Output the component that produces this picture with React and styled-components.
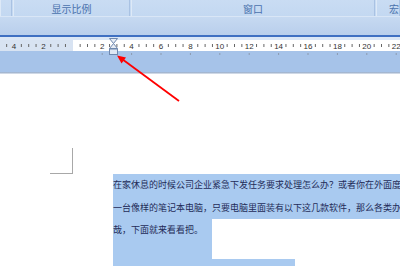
import React from 'react';
import styled, { createGlobalStyle } from 'styled-components';

const GlobalStyle = createGlobalStyle`
  html, body {
    margin: 0;
    padding: 0;
    width: 400px;
    height: 266px;
    overflow: hidden;
    background: #fff;
  }
`;

const Page = styled.div`
  position: relative;
  width: 400px;
  height: 266px;
  overflow: hidden;
  font-family: "Noto Sans CJK SC", "Liberation Sans", sans-serif;
`;

const LabelRow = styled.div`
  display: flex;
  height: 16px;
  background: linear-gradient(#c9dcf3, #c3d8f1);
  border-bottom: 1px solid #d9e6f6;
`;

const Group = styled.div`
  flex: ${p => (p.grow ? '1 0 auto' : '0 0 auto')};
  width: ${p => p.w}px;
  display: flex;
  align-items: center;
  justify-content: ${p => p.align || 'center'};
  padding-left: ${p => p.pad || 0}px;
  box-sizing: border-box;
  border-right: 1px solid #a9c2e3;
  border-left: 1px solid #dde9f7;
  margin-right: 1px;
  font-size: 10px;
  color: #4a72ad;
  white-space: nowrap;
  overflow: hidden;
`;

const RibbonBody = styled.div`
  height: 18px;
  background: linear-gradient(#c6d9f1, #b9cfec);
`;

const DarkLine = styled.div`
  height: 2px;
  background: #3f70c2;
`;

const LightStrip = styled.div`
  height: 3px;
  background: #dbe7f6;
`;

const RulerRow = styled.div`
  position: relative;
  height: 32px;
  background: #a6c3e9;
`;

const RulerStrip = styled.div`
  height: 11px;
  background: linear-gradient(to right, #d8e3f2 73px, #ffffff 73px);
  svg { display: block; overflow: visible; }
`;

const Marker = styled.svg`
  position: absolute;
  left: 109px;
  top: -2px;
`;

const Shadow = styled.div`
  height: 2px;
  background: linear-gradient(#8ea6c6, #e4e9f0);
`;

const Doc = styled.div`
  display: flex;
  flex-direction: column;
  padding-top: 74px;
`;

const CornerMark = styled.div`
  width: 22px;
  height: 25px;
  margin-left: 50px;
  border-right: 1px solid #a8a8a8;
  border-bottom: 1px solid #a8a8a8;
`;

const Selection = styled.div`
  margin-left: 113px;
  display: flex;
  flex-direction: column;
  font-size: 9px;
  color: #1f2c58;
`;

const Line = styled.div`
  height: 22.5px;
  line-height: 22.5px;
  background: #a9caf0;
  white-space: nowrap;
`;

const TailRow = styled.div`
  display: flex;
  height: 40px;
`;

const TailText = styled.div`
  width: 99px;
  background: #a9caf0;
  line-height: 22.5px;
  white-space: nowrap;
`;

const BottomBar = styled.div`
  width: 182px;
  height: 10px;
  background: #a9caf0;
`;

const Overlay = styled.svg`
  position: absolute;
  left: 0;
  top: 0;
  pointer-events: none;
`;

const UNIT = 14.7;
const ORIGIN = 72.8;

function Ruler() {
  const ticks = [];
  const labels = [];
  const tabs = [];
  for (let k = -10; k <= 46; k++) {
    const x = ORIGIN + (k * UNIT) / 2;
    if (x < 0 || x > 402) continue;
    if (k % 4 === 0) {
      if (k !== 0) {
        labels.push(
          <text key={'l' + k} x={x} y={8.5} textAnchor="middle" fontSize="8"
            fontFamily="Liberation Sans, sans-serif" fill="#333">
            {Math.abs(k / 2)}
          </text>
        );
      }
      if (k > 0) tabs.push(<rect key={'t' + k} x={x - 0.5} y={13} width={1} height={2} fill="#8c9bb0" />);
    } else {
      ticks.push(<rect key={'k' + k} x={x - 0.5} y={4} width={1} height={3} fill="#666" />);
    }
  }
  return (
    <svg width="400" height="11">
      {ticks}
      {labels}
      {tabs}
    </svg>
  );
}

export default function App() {
  return (
    <Page>
      <GlobalStyle />
      <LabelRow>
        <Group w={12} />
        <Group w={117}>显示比例</Group>
        <Group w={244}>窗口</Group>
        <Group grow align="flex-start" pad={12}>宏</Group>
      </LabelRow>
      <RibbonBody />
      <DarkLine />
      <LightStrip />
      <RulerRow>
        <RulerStrip>
          <Ruler />
        </RulerStrip>
        <Marker width="9" height="17" viewBox="0 0 9 17">
          <path d="M0.5 0.5 H8.5 L4.5 5.5 Z" fill="#e6ecf5" stroke="#6f88ae" />
          <path d="M4.5 5.5 L8.5 10.5 H0.5 Z" fill="#e6ecf5" stroke="#6f88ae" />
          <rect x="0.5" y="11" width="8" height="5.5" fill="#dfe7f3" stroke="#6f88ae" />
        </Marker>
      </RulerRow>
      <Shadow />
      <Doc>
        <CornerMark />
        <Selection>
          <Line>在家休息的时候公司企业紧急下发任务要求处理怎么办？或者你在外面度</Line>
          <Line>一台像样的笔记本电脑，只要电脑里面装有以下这几款软件，那么各类办</Line>
          <TailRow>
            <TailText>哉，下面就来看看把。</TailText>
          </TailRow>
          <BottomBar />
        </Selection>
      </Doc>
      <Overlay width="400" height="266">
        <line x1="179" y1="101" x2="122" y2="59" stroke="#f00" strokeWidth="1.8" />
        <polygon points="117,55.5 126,57.5 121.5,63.5" fill="#f00" />
      </Overlay>
    </Page>
  );
}
